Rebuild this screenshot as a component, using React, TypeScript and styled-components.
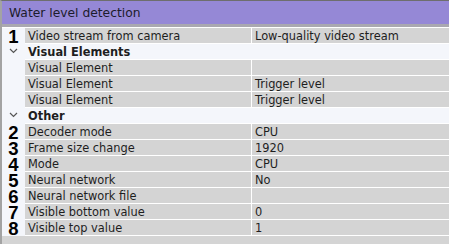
import React from 'react';
import styled, { createGlobalStyle } from 'styled-components';

const GlobalStyle = createGlobalStyle`
  html, body {
    margin: 0;
    padding: 0;
    background: #d4d4d4;
  }
  * {
    box-sizing: border-box;
  }
`;

const Panel = styled.div`
  width: 449px;
  height: 244px;
  overflow: hidden;
  background: #d4d4d4;
  border-top: 1px solid #6e6e6e;
  border-left: 2px solid #a3a3a3;
  font-family: 'DejaVu Sans', Verdana, sans-serif;
  font-size: 11.4px;
  color: #1e1e1e;
`;

const TitleBar = styled.div`
  height: 26px;
  padding-left: 7px;
  display: flex;
  align-items: center;
  background: #9588d6;
  border-bottom: 3px solid #a9a8b0;
  font-size: 12.3px;
  color: #1c1c2c;
`;

const Grid = styled.div`
  border-top: 1px solid #ffffff;
`;

const Row = styled.div`
  display: grid;
  grid-template-columns: 23px 227px 1fr;
  height: 16px;
`;

const Gutter = styled.div`
  background: #f4f6fb;
  display: flex;
  align-items: center;
  justify-content: center;
  overflow: visible;
`;

const Marker = styled.span`
  font-family: 'Liberation Sans', Arial, sans-serif;
  font-weight: 900;
  font-size: 18.5px;
  line-height: 15px;
  height: 15px;
  color: #000000;
  margin-top: 1px;
`;

const Cell = styled.div<{ $divider?: boolean }>`
  background: #d4d4d4;
  border-bottom: 1px solid #ffffff;
  border-right: ${(p) => (p.$divider ? '1px solid #ffffff' : 'none')};
  padding-left: 3px;
  display: flex;
  align-items: center;
  white-space: nowrap;
  overflow: hidden;
`;

const GroupCell = styled.div`
  grid-column: 2 / 4;
  background: #f4f6fb;
  border-bottom: 1px solid #ffffff;
  padding-left: 3px;
  display: flex;
  align-items: center;
  font-weight: bold;
`;

const Chevron = () => (
  <svg width="9" height="6" viewBox="0 0 9 6" style={{ marginBottom: 2 }}>
    <path d="M1 1 L4.5 4.5 L8 1" fill="none" stroke="#555" strokeWidth="1.2" />
  </svg>
);

type Item = { kind: 'row'; n?: number; name: string; value: string } | { kind: 'group'; name: string };

const items: Item[] = [
  { kind: 'row', n: 1, name: 'Video stream from camera', value: 'Low-quality video stream' },
  { kind: 'group', name: 'Visual Elements' },
  { kind: 'row', name: 'Visual Element', value: '' },
  { kind: 'row', name: 'Visual Element', value: 'Trigger level' },
  { kind: 'row', name: 'Visual Element', value: 'Trigger level' },
  { kind: 'group', name: 'Other' },
  { kind: 'row', n: 2, name: 'Decoder mode', value: 'CPU' },
  { kind: 'row', n: 3, name: 'Frame size change', value: '1920' },
  { kind: 'row', n: 4, name: 'Mode', value: 'CPU' },
  { kind: 'row', n: 5, name: 'Neural network', value: 'No' },
  { kind: 'row', n: 6, name: 'Neural network file', value: '' },
  { kind: 'row', n: 7, name: 'Visible bottom value', value: '0' },
  { kind: 'row', n: 8, name: 'Visible top value', value: '1' },
];

const App: React.FC = () => {
  return (
    <>
      <GlobalStyle />
      <Panel>
        <TitleBar>Water level detection</TitleBar>
        <Grid>
          {items.map((it, i) =>
            it.kind === 'group' ? (
              <Row key={i}>
                <Gutter>
                  <Chevron />
                </Gutter>
                <GroupCell>{it.name}</GroupCell>
              </Row>
            ) : (
              <Row key={i}>
                <Gutter>{it.n ? <Marker>{it.n}</Marker> : null}</Gutter>
                <Cell $divider>{it.name}</Cell>
                <Cell>{it.value}</Cell>
              </Row>
            )
          )}
        </Grid>
      </Panel>
    </>
  );
};

export default App;
